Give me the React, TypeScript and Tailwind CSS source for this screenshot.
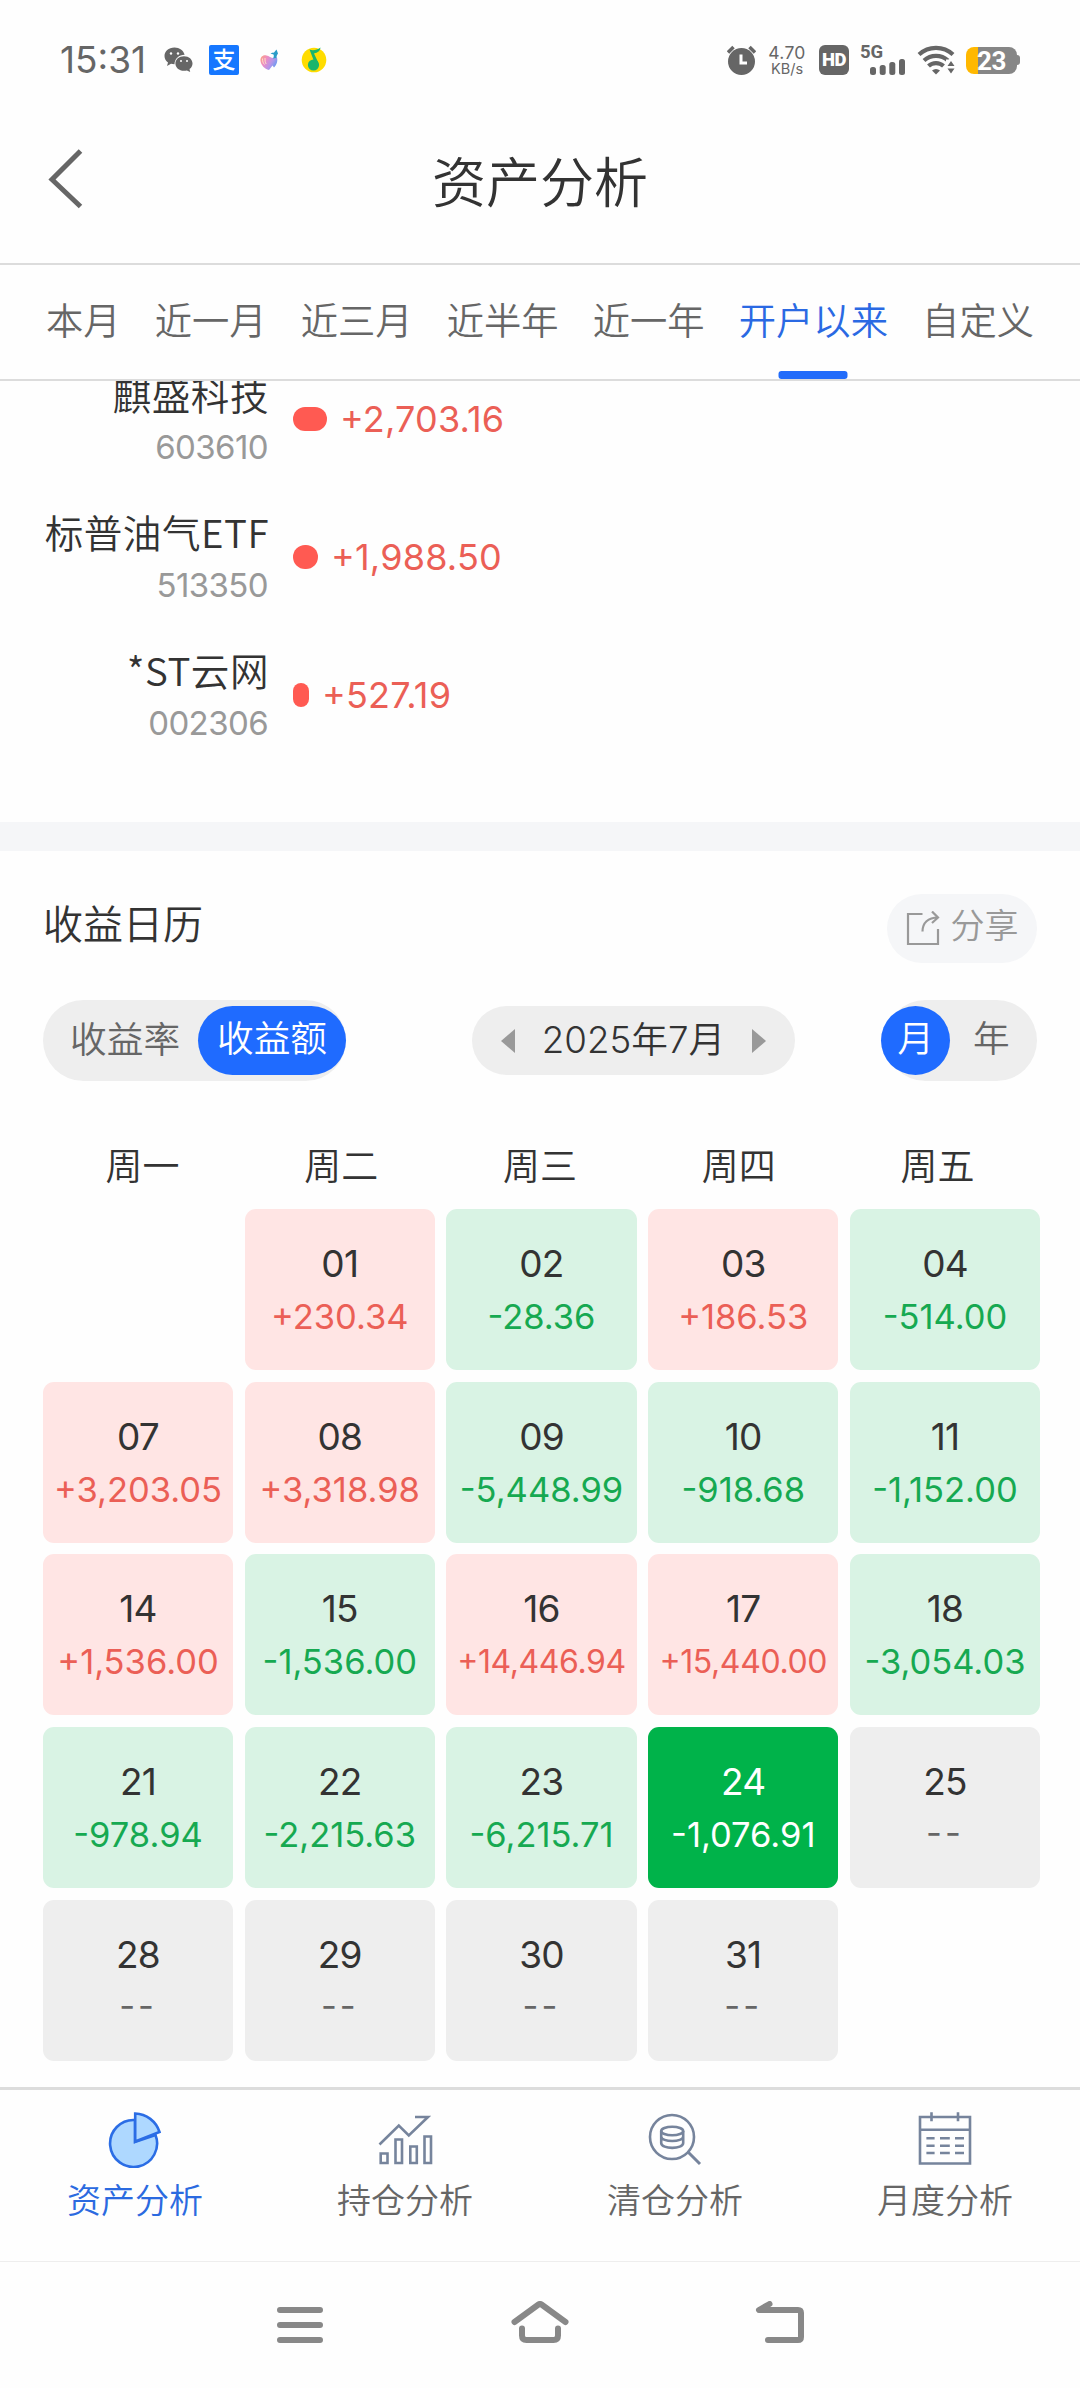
import { clsx } from "clsx";
import type { ReactNode } from "react";

const TABS = ["本月", "近一月", "近三月", "近半年", "近一年", "开户以来", "自定义"];
const WEEKDAYS = ["周一", "周二", "周三", "周四", "周五"];

interface Stock {
  name: string;
  code: string;
  amount: string;
  width: number;
}

const STOCKS: Stock[] = [
  { name: "麒盛科技", code: "603610", amount: "+2,703.16", width: 34 },
  { name: "标普油气ETF", code: "513350", amount: "+1,988.50", width: 25 },
  { name: "*ST云网", code: "002306", amount: "+527.19", width: 16 },
];

const DAYS: [string, string][] = [
  ["", ""],
  ["01", "+230.34"],
  ["02", "-28.36"],
  ["03", "+186.53"],
  ["04", "-514.00"],
  ["07", "+3,203.05"],
  ["08", "+3,318.98"],
  ["09", "-5,448.99"],
  ["10", "-918.68"],
  ["11", "-1,152.00"],
  ["14", "+1,536.00"],
  ["15", "-1,536.00"],
  ["16", "+14,446.94"],
  ["17", "+15,440.00"],
  ["18", "-3,054.03"],
  ["21", "-978.94"],
  ["22", "-2,215.63"],
  ["23", "-6,215.71"],
  ["24", "-1,076.91"],
  ["25", "--"],
  ["28", "--"],
  ["29", "--"],
  ["30", "--"],
  ["31", "--"],
];

function StatusBar() {
  return (
    <div className="flex h-[120px] items-center justify-between px-[60px] text-[#666]">
      <div className="flex items-center">
        <span className="-mt-[2px] w-[104px] text-[37px] font-normal leading-none">15:31</span>
        <svg width="30" height="26" viewBox="0 0 30 26" fill="#666">
          <path d="M10.5 0.5C4.500.5 0.500 4.200 0.500 9c0 2.700 1.400 5 3.500 6.600L3 19l4-2.200c1 .3 2.200.4 3.500.4C10.600 11.600 15 7.700 20.600 7.700 19.500 3.400 15.500.5 10.500.5Z" />
          <path d="M20 9.200c-5 0-8.600 3.200-8.600 7.300s3.600 7.300 8.600 7.300c1 0 2-.1 2.900-.4L26.200 25l-.7-2.900c2-1.400 3-3.400 3-5.600 0-4.100-3.500-7.300-8.500-7.300Z" />
          <g fill="#fff">
            <circle cx="7" cy="6.500" r="1.200" />
            <circle cx="14" cy="6.500" r="1.200" />
            <circle cx="17" cy="14" r="1" />
            <circle cx="23" cy="14" r="1" />
          </g>
        </svg>
        <div className="ml-[15px] flex size-[30px] items-center justify-center rounded-[2px] bg-[#1677ff] text-[23px] font-medium leading-none text-white">
          支
        </div>
        <svg className="ml-[21px]" width="18" height="22" viewBox="0 0 18 22">
          <defs>
            <linearGradient id="whale" x1="0" y1="0.2" x2="1" y2="0.7">
              <stop offset="0" stopColor="#f9a08c" />
              <stop offset="0.3" stopColor="#ee8cc4" />
              <stop offset="0.65" stopColor="#b596ea" />
              <stop offset="1" stopColor="#5b9cf0" />
            </linearGradient>
          </defs>
          <path d="M0.500 12C0 8 3 5.500 6.500 6.500 9 7 11 9 13.500 9L17 8.500c1 4-.5 7.500-3 10l-1.500-2-3.500 4.500C4.500 20 1 16 0.500 12Z" fill="url(#whale)" />
          <path d="M10.500 4.500C12 3.500 13 4 14 3.500L16.500 0.500 18 4.500C17.500 5.500 16.500 6 16.500 9L13 9.500C14 7.500 14 6.500 13.500 5.500Z" fill="#2a9cc8" />
          <path d="M2.500 9.500c0 3 .5 4.500 2 6M5 9c0 3 .3 4.500 1.200 6" stroke="#ffe9c8" strokeWidth="0.900" fill="none" />
        </svg>
        <svg className="ml-[23px]" width="26" height="26" viewBox="0 0 26 26">
          <circle cx="13" cy="13" r="12.300" fill="#ffdc00" />
          <path d="M8.500 2.500C12 4 16 3 19.500 0.500 19 4 17 5.500 13 6.500l4 8.500-3.500.5Z" fill="#1bb56c" />
          <circle cx="12.500" cy="18" r="5.600" fill="#1bb56c" />
        </svg>
      </div>

      <div className="flex items-center">
        <svg width="29" height="30" viewBox="0 0 29 30">
          <circle cx="14.500" cy="16.500" r="13.500" fill="#666" />
          <path d="M1 7.500 6.500 2M28 7.500 22.500 2" stroke="#666" strokeWidth="3.500" />
          <path d="M14 9.500v8.500h6" stroke="#fff" strokeWidth="3" fill="none" />
        </svg>
        <div className="ml-[11px] flex w-[40px] flex-col items-center font-normal leading-none">
          <span className="text-[17.5px] leading-[17px] tracking-[0.3px]">4.70</span>
          <span className="text-[14.5px] leading-[16px]">KB/s</span>
        </div>
        <div className="ml-[12px] flex size-[30px] items-center justify-center rounded-[6px] bg-[#666] font-['Roboto',sans-serif] text-[18.5px] font-black leading-none tracking-[-0.5px] text-white">
          HD
        </div>
        <div className="relative ml-[11px] h-[30px] w-[45px]">
          <span className="absolute -top-px left-0 font-['Roboto',sans-serif] text-[18.5px] font-bold leading-[17px]">5G</span>
          <svg className="absolute right-0 bottom-0" width="35" height="16" viewBox="0 0 35 16" fill="#666">
            <rect x="0" y="8" width="6" height="8" rx="2.500" />
            <rect x="9.700" y="6" width="6" height="10" rx="2.500" />
            <rect x="19.300" y="3" width="6" height="13" rx="2.500" />
            <rect x="29" y="0" width="6" height="16" rx="2.500" />
          </svg>
        </div>
        <svg className="ml-[12px]" width="38" height="30" viewBox="0 0 38 30">
          <g fill="none" stroke="#666" strokeWidth="4.200">
            <path d="M2 9.500a25 25 0 0 1 34 0" />
            <path d="M7 15.500a18 18 0 0 1 24 0" />
            <path d="M11.500 21a11 11 0 0 1 15 0" />
          </g>
          <path d="M15 25.500a6 6 0 0 1 8 0L19 29.500Z" fill="#666" />
          <path d="M29 14.500h9v15.500h-9Z" fill="#fefefe" />
          <path d="M30.500 21l3.500-5 3.500 5ZM30.500 23.500h7l-3.500 5Z" fill="#666" />
        </svg>
        <div className="ml-[11px] flex h-[27px] w-[51px] items-center justify-center rounded-[8px] bg-linear-to-r from-[#ffb800] from-[12px] to-[#868686] to-[12px] pt-[1px] font-['Roboto',sans-serif] text-[26px] font-bold leading-none tracking-[-0.5px] text-white">
          23
        </div>
        <div className="h-[10px] w-[3px] rounded-r-full bg-[#868686]" />
      </div>
    </div>
  );
}

function StockRow({ stock }: { stock: Stock }) {
  return (
    <div className="flex h-[138px] items-center">
      <div className="flex w-[268px] shrink-0 flex-col items-end pt-[6px]">
        <span className="-mr-px font-['Noto_Sans_CJK_SC',sans-serif] text-[38.6px] leading-[50px] tracking-[0.5px] text-[#333]">
          {stock.name}
        </span>
        <span className="text-[33px] font-normal leading-[58px] tracking-[-0.6px] text-[#999]">{stock.code}</span>
      </div>
      <div className="ml-[25px] h-[24px] rounded-full bg-[#ff5a52]" style={{ width: stock.width }} />
      <span className="ml-[13px] text-[36px] font-normal tracking-[0.2px] text-[#eb5f56]">{stock.amount}</span>
    </div>
  );
}

function DayCell({ day, amount }: { day: string; amount: string }) {
  if (!day) return <div />;
  const today = day === "24";
  const empty = amount === "--";
  const up = amount.startsWith("+");
  return (
    <div
      className={clsx(
        "flex h-[161px] flex-col items-center rounded-[11px] pt-[30px] font-normal",
        today ? "bg-[#00b34a] text-white" : empty ? "bg-[#eee]" : up ? "bg-[#ffe5e4]" : "bg-[#d9f3e4]"
      )}
    >
      <span className={clsx("text-[37px] leading-[50px] tracking-[-0.8px]", !today && "text-[#333]")}>{day}</span>
      <span
        className={clsx(
          "leading-[56px]",
          empty && "tracking-[3px]",
          amount.length > 9 ? "text-[32px] tracking-[-0.4px]" : "text-[34.5px]",
          !today && (empty ? "text-[#666]" : up ? "text-[#eb5f56]" : "text-[#16a951]")
        )}
      >
        {amount}
      </span>
    </div>
  );
}

function NavItem({ label, active, children }: { label: string; active?: boolean; children: ReactNode }) {
  return (
    <div className="flex flex-1 flex-col items-center pt-[22px]">
      <svg width="56" height="56" viewBox="0 0 56 56" fill="none" stroke={active ? "#2b6de5" : "#76849c"} strokeWidth="2.600">
        {children}
      </svg>
      <span className={clsx("mt-[8px] text-[34px] leading-[50px]", active ? "text-[#2b6ae0]" : "text-[#666]")}>{label}</span>
    </div>
  );
}

export default function App() {
  return (
    <div className="flex h-[2388px] w-[1080px] flex-col overflow-hidden bg-[#fefefe] font-['Inter','Noto_Sans_CJK_SC',sans-serif] font-[350] [font-feature-settings:'case']">
      <StatusBar />

      <div className="grid h-[143px] grid-cols-[1fr_auto_1fr] items-center pb-[16px]">
        <svg className="mt-[-9px] ml-[48px]" width="36" height="60" viewBox="0 0 36 60">
          <path d="M32.500 2 4 30.500 32.500 57.500" fill="none" stroke="#666" strokeWidth="5" />
        </svg>
        <h1 className="text-[54px] leading-none text-[#333]">资产分析</h1>
      </div>

      <div className="flex h-[118px] items-center justify-between border-y-2 border-[#dcdcdc] px-[46px] text-[37.3px] text-[#666]">
        {TABS.map((tab) => (
          <div key={tab} className={clsx("relative flex h-full items-center", tab === "开户以来" && "text-[#2a69e3]")}>
            {tab}
            {tab === "开户以来" && (
              <div className="absolute bottom-0 left-1/2 h-[8px] w-[69px] -translate-x-1/2 rounded-[3px] bg-[#226cfa]" />
            )}
          </div>
        ))}
      </div>

      <div className="h-[441px] overflow-hidden">
        <div className="-mt-[31px]">
          {STOCKS.map((stock) => (
            <StockRow key={stock.code} stock={stock} />
          ))}
        </div>
      </div>

      <div className="h-[29px] bg-[#f5f6f8]" />

      <div className="mt-[43px] flex h-[69px] items-center justify-between px-[43px]">
        <h2 className="-mt-[8px] text-[40px] leading-none text-[#333]">收益日历</h2>
        <div className="flex h-[69px] w-[150px] items-center justify-center gap-[11px] rounded-full bg-[#f5f6f8] text-[34px] text-[#999]">
          <svg width="34" height="35" viewBox="0 0 34 35" fill="none" stroke="#999" strokeWidth="2.200">
            <path d="M16.500 3H2v30h30V18" />
            <path d="M16.500 20.500C16.500 12 22 6.500 32 6.500M26 0.500l6 6-6 5.500" />
          </svg>
          <span className="-mt-[6px] leading-none">分享</span>
        </div>
      </div>

      <div className="mt-[37px] flex h-[81px] items-center justify-between px-[43px] text-[36.7px] leading-none text-[#666]">
        <div className="flex h-full w-[303px] items-center rounded-full bg-[#eee]">
          <span className="w-[155px] pl-[27px]">收益率</span>
          <span className="flex h-[69px] w-[148px] items-center justify-center rounded-full bg-[#1f6bff] pb-[2px] text-white">收益额</span>
        </div>
        <div className="ml-[36px] flex h-[69px] w-[323px] items-center justify-between rounded-full bg-[#eee] px-[29px]">
          <svg width="14" height="24" viewBox="0 0 14 24">
            <path d="M14 0v24L0 12Z" fill="#999" />
          </svg>
          <span className="text-[#333]">2025年7月</span>
          <svg width="14" height="24" viewBox="0 0 14 24">
            <path d="M0 0v24l14-12Z" fill="#999" />
          </svg>
        </div>
        <div className="flex h-full w-[152px] items-center rounded-full bg-[#eee]">
          <span className="-ml-[4px] flex size-[69px] items-center justify-center rounded-full bg-[#1f6bff] pb-[2px] text-white">月</span>
          <span className="ml-[23px] pb-[3px]">年</span>
        </div>
      </div>

      <div className="mt-[60px] grid h-[50px] grid-cols-5 items-center px-[43px] text-center text-[37px] leading-none text-[#333]">
        {WEEKDAYS.map((day) => (
          <span key={day}>{day}</span>
        ))}
      </div>

      <div className="mt-[18px] grid grid-cols-5 gap-[11.7px] pr-[40px] pl-[43px]">
        {DAYS.map(([day, amount], i) => (
          <DayCell key={i} day={day} amount={amount} />
        ))}
      </div>

      <div className="mt-auto flex h-[174px] shrink-0 border-t-[3px] border-[#dcdcdc]">
        <NavItem label="资产分析" active>
          <path d="M28 8A23.500 23.500 0 1 0 48.500 23L28 30Z" fill="#aed8ff" />
          <path d="M28.200 1.500V29.500L52.500 20A26.500 26.500 0 0 0 28.200 1.500Z" fill="#aed8ff" />
        </NavItem>
        <NavItem label="持仓分析">
          <path d="M2.500 32.500 21.800 13.500l10 10L51 5H38" />
          <path d="M3.700 41.500h6.800v9.500H3.700ZM18.500 27.500h6.500V51h-6.500ZM33.300 34.500h6.500V51h-6.500ZM47.500 24.500h6.500V51h-6.500Z" />
        </NavItem>
        <NavItem label="清仓分析">
          <circle cx="25" cy="25" r="22" />
          <path d="M41 40 53 52" strokeWidth="3" />
          <ellipse cx="25.200" cy="19" rx="11" ry="4.300" />
          <path d="M14.200 19v5.500c0 6 22 6 22 0V19M14.200 24.500v6.500c0 6.500 22 6.500 22 0v-6.500" />
        </NavItem>
        <NavItem label="月度分析">
          <path d="M3 5h50v46.500H3ZM3 17.700h50M14.500 0.300v9M41 0.300v9" />
          <path d="M9.400 26.300h8.200M23 26.300h9.800M38 26.300h9M9.400 33.700h8.200M23 33.700h9.800M38 33.700h9M9.400 41h8.200M23 41h9.800M38 41h9" />
        </NavItem>
      </div>

      <div className="flex h-[127px] shrink-0 items-center justify-center gap-[180px] border-t border-[#eee]">
        <svg width="60" height="48" viewBox="0 0 60 48" fill="none" stroke="#888" strokeWidth="6" strokeLinecap="round">
          <path d="M10 9h40M10 24h40M10 39h40" />
        </svg>
        <svg width="60" height="48" viewBox="0 0 60 48" fill="none" stroke="#888" strokeWidth="6" strokeLinecap="round" strokeLinejoin="round">
          <path d="M4.500 21 28.500 3.500q1.500-1 3 0L55.500 21M12 27.500v7q0 4.500 4.500 4.500h27q4.500 0 4.500-4.500v-7" />
        </svg>
        <svg width="60" height="48" viewBox="0 0 60 48" fill="none" stroke="#888" strokeWidth="6" strokeLinecap="round" strokeLinejoin="round">
          <path d="M19.500 3 9 9h39q3 0 3 3v24q0 3-3 3H18" />
        </svg>
      </div>
    </div>
  );
}
